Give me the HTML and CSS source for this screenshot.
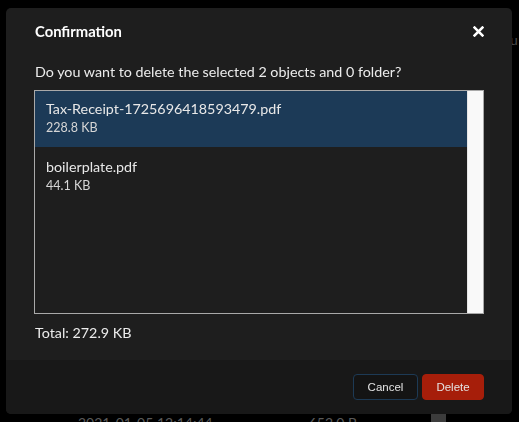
FILE: index.html
```html
<!DOCTYPE html>
<html>
<head>
<meta charset="utf-8">
<link rel="stylesheet" href="styles.css">
</head>
<body>
<div class="page">
  <div class="page-top"><span class="page-heading">u</span></div>
  <div class="page-row">
    <span class="cell-date">2021-01-05 12:14:44</span>
    <span class="cell-size">652.0 B</span>
    <span class="cell-thumb"></span>
  </div>
</div>
<div class="overlay">
  <div class="modal">
    <div class="modal-header">
      <span class="modal-title">Confirmation</span>
      <svg class="close" width="11" height="11" viewBox="0 0 11 11"><path d="M1.6 1.6 L9.4 9.4 M9.4 1.6 L1.6 9.4" stroke="#fff" stroke-width="2.6" stroke-linecap="square"/></svg>
    </div>
    <div class="modal-body">
      <p class="question">Do you want to delete the selected 2 objects and 0 folder?</p>
      <div class="list">
        <div class="list-items">
          <div class="item selected">
            <div class="item-name">Tax-Receipt-1725696418593479.pdf</div>
            <div class="item-size">228.8 KB</div>
          </div>
          <div class="item">
            <div class="item-name">boilerplate.pdf</div>
            <div class="item-size">44.1 KB</div>
          </div>
        </div>
        <div class="scroll-track"></div>
      </div>
      <p class="total">Total: 272.9 KB</p>
    </div>
    <div class="modal-footer">
      <button class="btn btn-cancel">Cancel</button>
      <button class="btn btn-delete">Delete</button>
    </div>
  </div>
</div>
</body>
</html>
```

FILE: styles.css
```css
html, body {
  margin: 0;
  padding: 0;
}
body {
  background: #000;
  font-family: Lato, "Noto Sans", sans-serif;
  width: 519px;
  height: 422px;
  overflow: hidden;
}
.page {
  height: 422px;
  display: flex;
  flex-direction: column;
  justify-content: space-between;
  overflow: hidden;
}
.page-top {
  display: flex;
  padding-top: 31px;
  padding-left: 510px;
}
.page-heading {
  color: #4e4e4e;
  font-size: 14px;
}
.page-row {
  display: flex;
  align-items: flex-end;
  height: 17px;
  color: #5a5a5a;
  font-size: 14px;
  line-height: 16px;
}
.cell-date {
  margin-left: 78px;
  margin-bottom: -9px;
}
.cell-size {
  margin-left: 96px;
  margin-bottom: -9px;
}
.cell-thumb {
  margin-left: 74px;
  width: 15px;
  height: 17px;
  background: #3c3c3c;
}
.overlay {
  position: fixed;
  inset: 0;
  padding: 8px 7px 8px 6px;
}
.modal {
  width: 506px;
  height: 406px;
  background: #1e1e1e;
  border-radius: 5px;
  display: flex;
  flex-direction: column;
  overflow: hidden;
}
.modal-header {
  height: 46px;
  padding: 0 28px 0 29px;
  display: flex;
  align-items: center;
  justify-content: space-between;
  flex: none;
}
.modal-title {
  color: #fff;
  font-weight: 700;
  font-size: 14.8px;
}
.close {
  display: block;
}
.modal-body {
  padding: 8px 28px 0 28px;
  flex: 1;
}
.question {
  margin: 0 0 8px 1px;
  color: #ececec;
  font-size: 14.3px;
  line-height: 20px;
}
.list {
  height: 222px;
  border: 1px solid #a9a9a9;
  display: flex;
}
.list-items {
  flex: 1;
}
.item {
  height: 56px;
  padding: 8px 11px 0 11px;
  box-sizing: border-box;
  margin-bottom: 2px;
}
.item.selected {
  background: #1c3a57;
}
.item-name {
  color: #e8e8e8;
  font-size: 14.3px;
  line-height: 20px;
}
.item-size {
  color: #d6d6d6;
  font-size: 12.5px;
  line-height: 18px;
}
.scroll-track {
  width: 15px;
  background: #f9f9f9;
  border-left: 1px solid #e6e6e6;
}
.total {
  margin: 9px 0 0 1px;
  color: #ececec;
  font-size: 14.3px;
  line-height: 20px;
}
.modal-footer {
  height: 54px;
  flex: none;
  background: #181818;
  padding: 0 28px;
  display: flex;
  align-items: center;
  justify-content: flex-end;
  gap: 4px;
}
.btn {
  height: 26px;
  border-radius: 4px;
  font-family: "Liberation Sans", Arial, sans-serif;
  font-size: 11.5px;
  color: #e4e4e4;
  padding: 0;
  cursor: pointer;
}
.btn-cancel {
  width: 65px;
  background: #141414;
  border: 1px solid #1d3a55;
}
.btn-delete {
  width: 62px;
  background: #a61e0a;
  border: 1px solid #a61e0a;
}
```
